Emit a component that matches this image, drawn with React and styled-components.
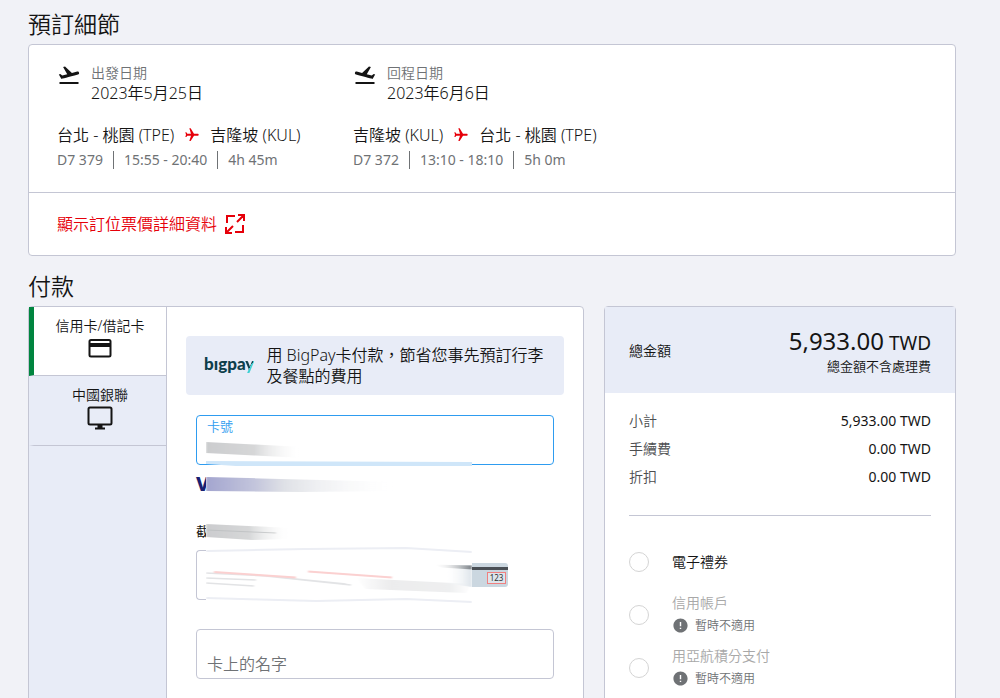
import React, { useState } from 'react'
import styled, { createGlobalStyle, css } from 'styled-components'
import { MdFlightTakeoff, MdFlight, MdError } from 'react-icons/md'

const color = {
  page: '#f1f2f7',
  panel: '#e8ecf7',
  line: '#c4c6d4',
  text: '#141414',
  grey: '#6f7275',
  red: '#e6000a',
  blue: '#2e9cf0',
  green: '#00853f',
}

const GlobalStyle = createGlobalStyle`
  * {
    box-sizing: border-box;
  }

  body {
    margin: 0;
    background: ${color.page};
    color: ${color.text};
    font-family: 'Noto Sans', 'Noto Sans CJK TC', sans-serif;
    font-size: 14px;
    font-weight: 350;
    line-height: 20px;
  }

  button, input {
    font: inherit;
    color: inherit;
  }
`

const Page = styled.main`
  padding: 8px 44px 0 28px;
`

const Title = styled.h2`
  margin: 0;
  font-size: 23px;
  font-weight: 350;
  line-height: 32px;
`

const Card = styled.section`
  background: white;
  border: 1px solid ${color.line};
  border-radius: 4px;
`

const BookingCard = styled(Card)`
  margin: 4px 0 14px;
`

const Flights = styled.div`
  display: flex;
  padding: 18px 28px 23px;
`

const Flight = styled.div`
  flex: 0 0 296px;
`

const FlightDate = styled.div`
  display: flex;
  gap: 10px;
  margin-bottom: 20px;
`

const FlightIcon = styled.span`
  display: flex;
  width: 24px;
  height: 24px;
  transform: ${props => (props.$mirrored ? 'scaleX(-1)' : 'none')};

  svg {
    width: 24px;
    height: 24px;
  }
`

const DateLabel = styled.div`
  color: ${color.grey};
`

const DateValue = styled.div`
  font-size: 16px;
`

const Route = styled.div`
  display: flex;
  align-items: center;
  gap: 10px;
  font-size: 16px;
  line-height: 24px;
  white-space: nowrap;

  svg {
    width: 16px;
    height: 16px;
    color: ${color.red};
    transform: rotate(90deg);
  }
`

const Facts = styled.div`
  display: flex;
  color: ${color.grey};
  font-weight: 400;
  line-height: 18px;
  margin-top: 4px;

  span + span {
    margin-left: 10px;
    padding-left: 10px;
    border-left: 1px solid ${color.grey};
  }
`

const DetailsBar = styled.div`
  border-top: 1px solid ${color.line};
  padding: 19px 28px;
`

const DetailsLink = styled.a`
  display: inline-flex;
  align-items: center;
  gap: 8px;
  color: ${color.red};
  font-size: 16px;
  line-height: 24px;
  text-decoration: none;
`

const Payment = styled.div`
  display: grid;
  grid-template-columns: 556fr 352fr;
  gap: 20px;
  margin-top: 4px;
`

const MethodCard = styled(Card)`
  display: flex;
  border-radius: 4px 4px 0 0;
`

const Tabs = styled.nav`
  flex: 0 0 138px;
  background: ${color.panel};
  border-right: 1px solid ${color.line};
`

const Tab = styled.button`
  display: flex;
  flex-direction: column;
  align-items: center;
  gap: 1px;
  width: 100%;
  height: 70px;
  padding: 9px 0 0;
  border: 0;
  border-left: 5px solid transparent;
  border-bottom: 1px solid ${color.line};
  background: none;

  ${props => props.$active && css`
    height: 69px;
    background: white;
    border-left-color: ${color.green};
  `}
`

const Form = styled.form`
  flex: 1;
  min-width: 0;
  padding: 29px 19px 40px;
`

const Promo = styled.div`
  display: flex;
  align-items: center;
  gap: 12px;
  padding: 9px 17px 8px 18px;
  margin-bottom: 20px;
  background: ${color.panel};
  border-radius: 4px;
  font-size: 16px;
  line-height: 21px;
`

const Logo = styled.span`
  flex: none;
  padding-bottom: 6px;
  color: #0e3f4b;
  font-family: Lato, sans-serif;
  font-size: 17px;
  font-weight: 900;
`

const LogoTail = styled.span`
  background: linear-gradient(120deg, #0e3f4b 62%, #3fd0d4 62%);
  background-clip: text;
  color: transparent;
`

const Fields = styled.div`
  position: relative;
  margin: 0 10px;
`

const Field = styled.label`
  display: flex;
  flex-direction: column;
  height: 50px;
  padding: 0 10px;
  background: white;
  border: 1px solid ${props => (props.$focused ? color.blue : color.line)};
  border-radius: 4px;
`

const FieldLabel = styled.span`
  color: ${color.blue};
  font-size: 13px;
  line-height: 20px;
`

const Input = styled.input`
  width: 100%;
  height: 28px;
  margin-top: auto;
  padding: 0;
  border: 0;
  outline: 0;
  background: transparent;
  font-size: 16px;

  &::placeholder {
    color: ${color.grey};
    opacity: 1;
  }
`

const Brand = styled.div`
  height: 14px;
  margin: 12px 0 33px;
  color: #1a1f71;
  font-size: 20px;
  font-weight: 800;
  line-height: 14px;
`

const ExpiryLabel = styled.div`
  height: 14px;
  margin-bottom: 12px;
  font-size: 13px;
  font-weight: 400;
  line-height: 14px;
`

const SecurityRow = styled.div`
  display: flex;
  align-items: center;
  margin-bottom: 29px;
`

const SecurityField = styled(Field)`
  flex: 0 0 276px;
  border-right: 0;
`

const Overlay = styled.svg`
  position: absolute;
  left: 10px;
  top: 0;
  pointer-events: none;
`

const Summary = styled(Card)`
  border-radius: 4px 4px 0 0;
`

const Total = styled.div`
  display: flex;
  align-items: center;
  justify-content: space-between;
  padding: 20px 24px 18px;
  background: ${color.panel};
`

const TotalAmount = styled.div`
  font-size: 19px;
  font-weight: 400;
  line-height: 28px;
  text-align: right;
`

const Big = styled.span`
  font-size: 24px;
`

const TotalNote = styled.div`
  font-size: 13px;
  line-height: 18px;
  text-align: right;
`

const Lines = styled.dl`
  margin: 0 24px;
  padding: 14px 0 24px;
  border-bottom: 1px solid ${color.line};
`

const Line = styled.div`
  display: flex;
  justify-content: space-between;
  line-height: 28px;

  dt {
    color: #4c4e50;
  }

  dd {
    margin: 0;
    font-weight: 400;
  }
`

const Options = styled.div`
  padding: 19px 24px 40px;
`

const Option = styled.label`
  display: flex;
  align-items: center;
  gap: 23px;
  height: 53px;
`

const Radio = styled.input.attrs({ type: 'radio' })`
  appearance: none;
  width: 20px;
  height: 20px;
  margin: 0;
  border: 1px solid #d4d4d4;
  border-radius: 50%;
  background: white;

  &:checked {
    border: 6px solid ${color.green};
  }
`

const OptionName = styled.div`
  color: ${props => (props.$off ? '#a8a8a8' : color.text)};
  line-height: 22px;
`

const Unavailable = styled.div`
  display: flex;
  align-items: center;
  gap: 6px;
  color: ${color.grey};
  font-size: 12px;
  line-height: 24px;
`

const ExpandIcon = () => (
  <svg width="20" height="20" viewBox="0 0 20 20" fill="none" stroke="currentColor" strokeWidth="2">
    <path d="M10 2H2v7M18 11v7h-8M12 8l6-6M8 12l-6 6M13 1h6v6M1 13v6h6" />
  </svg>
)

const CardIcon = () => (
  <svg width="24" height="24" viewBox="0 0 24 24" fill="none" stroke="#141414" strokeWidth="2">
    <rect x="1.5" y="3" width="21" height="16.5" rx="1.5" />
    <path d="M2 8h20" strokeWidth="4" />
  </svg>
)

const MonitorIcon = () => (
  <svg width="26" height="24" viewBox="0 0 26 24" fill="none" stroke="#141414" strokeWidth="2">
    <rect x="1.5" y="1.5" width="23" height="17" rx="1.5" />
    <path d="M13 18v4" strokeWidth="5" />
    <path d="M8 22.5h10" />
  </svg>
)

const CvvCard = () => (
  <svg width="36" height="24" viewBox="0 0 36 24">
    <path d="M0 0h33a3 3 0 0 1 3 3v18a3 3 0 0 1-3 3H0z" fill="#cbd7e0" />
    <path d="M0 4h36v3H0z" fill="#4a4f55" />
    <rect x="15.5" y="9.5" width="18" height="11" fill="#dde5eb" stroke="#f08080" />
    <text x="24.5" y="18" fontSize="8" fontWeight="400" textAnchor="middle" fill="#333">123</text>
  </svg>
)

// Smudged strokes that hide the card details
const Smudges = () => (
  <Overlay width="266" height="192" viewBox="0 0 266 192">
    <defs>
      <linearGradient id="grey">
        <stop offset="0" stopColor="#cbccce" />
        <stop offset="0.5" stopColor="#d6d7d8" />
        <stop offset="1" stopColor="#fff" stopOpacity="0" />
      </linearGradient>
      <linearGradient id="navy">
        <stop offset="0" stopColor="#a3a5cf" />
        <stop offset="0.25" stopColor="#c3c5dc" />
        <stop offset="0.4" stopColor="#dfe1e6" />
        <stop offset="1" stopColor="#fff" stopOpacity="0" />
      </linearGradient>
      <linearGradient id="stripe">
        <stop offset="0" stopColor="#fff" stopOpacity="0" />
        <stop offset="1" stopColor="#7b8186" />
      </linearGradient>
      <linearGradient id="haze">
        <stop offset="0" stopColor="#fff" stopOpacity="0" />
        <stop offset="1" stopColor="#dde4ea" />
      </linearGradient>
      <linearGradient id="patch">
        <stop offset="0" stopColor="#fff" />
        <stop offset="0.3" stopColor="#ececed" />
        <stop offset="0.8" stopColor="#eeeff0" />
        <stop offset="1" stopColor="#fff" />
      </linearGradient>
      <filter id="soft" x="-5%" y="-20%" width="110%" height="140%">
        <feGaussianBlur stdDeviation="1 0.6" />
      </filter>
    </defs>
    <path d="M0 46l266 1v4H30L0 49z" fill="#cfe6f9" />
    <path d="M0 58h20v66H0zM0 132h266v58H0z" fill="#fff" />
    <g filter="url(#soft)">
      <path d="M0 27l97 5v11L0 38z" fill="url(#grey)" />
      <path d="M0 62l195 5v9l-100 1L0 76z" fill="url(#navy)" />
      <path d="M0 109l86 4v11l-40 1L0 122z" fill="url(#grey)" />
      <path d="M0 115l70 3" stroke="#b9bbbd" strokeWidth="0.7" />
      <path d="M0 136l100-2 100-1 66 4" fill="none" stroke="#eceef4" strokeWidth="2" />
      <path d="M0 183l110 3 90-2 66 3" fill="none" stroke="#eceef4" strokeWidth="2" />
      <path d="M0 158l60 3 80 8M0 163l50 2M0 168l48 3M50 160l95 10" fill="none" stroke="#e2e3e5" strokeWidth="1.4" />
      <path d="M150 163l116 6-6 9-100-4z" fill="url(#patch)" />
      <path d="M238 150h28v22l-28-4z" fill="url(#haze)" />
      <path d="M226 149.500l40 1v4l-30-2z" fill="url(#stripe)" />
      <path d="M8 157l82 5.500M102 156.500l84 6" stroke="#fbd0d0" strokeWidth="2" />
    </g>
  </Overlay>
)

const flights = [
  {
    label: '出發日期',
    date: '2023年5月25日',
    from: '台北 - 桃園 (TPE)',
    to: '吉隆坡 (KUL)',
    facts: ['D7 379', '15:55 - 20:40', '4h 45m'],
  },
  {
    inbound: true,
    label: '回程日期',
    date: '2023年6月6日',
    from: '吉隆坡 (KUL)',
    to: '台北 - 桃園 (TPE)',
    facts: ['D7 372', '13:10 - 18:10', '5h 0m'],
  },
]

const lines = [
  ['小計', '5,933.00 TWD'],
  ['手續費', '0.00 TWD'],
  ['折扣', '0.00 TWD'],
]

const options = [
  { name: '電子禮券' },
  { name: '信用帳戶', off: true },
  { name: '用亞航積分支付', off: true },
]

const App = () => {
  const [tab, setTab] = useState('card')

  return (
    <Page>
      <GlobalStyle />
      <Title>預訂細節</Title>
      <BookingCard>
        <Flights>
          {flights.map(flight => (
            <Flight key={flight.label}>
              <FlightDate>
                <FlightIcon $mirrored={flight.inbound}><MdFlightTakeoff /></FlightIcon>
                <div>
                  <DateLabel>{flight.label}</DateLabel>
                  <DateValue>{flight.date}</DateValue>
                </div>
              </FlightDate>
              <Route>
                {flight.from}
                <MdFlight />
                {flight.to}
              </Route>
              <Facts>
                {flight.facts.map(fact => <span key={fact}>{fact}</span>)}
              </Facts>
            </Flight>
          ))}
        </Flights>
        <DetailsBar>
          <DetailsLink href="#details">
            顯示訂位票價詳細資料
            <ExpandIcon />
          </DetailsLink>
        </DetailsBar>
      </BookingCard>

      <Title>付款</Title>
      <Payment>
        <MethodCard>
          <Tabs>
            <Tab type="button" $active={tab === 'card'} onClick={() => setTab('card')}>
              信用卡/借記卡
              <CardIcon />
            </Tab>
            <Tab type="button" $active={tab === 'union'} onClick={() => setTab('union')}>
              中國銀聯
              <MonitorIcon />
            </Tab>
          </Tabs>
          <Form>
            <Promo>
              <Logo>bıgpa<LogoTail>y</LogoTail></Logo>
              <span>用 BigPay卡付款，節省您事先預訂行李及餐點的費用</span>
            </Promo>
            <Fields>
              <Field $focused>
                <FieldLabel>卡號</FieldLabel>
                <Input />
              </Field>
              <Brand>V</Brand>
              <ExpiryLabel>截</ExpiryLabel>
              <SecurityRow>
                <SecurityField>
                  <Input aria-label="CVV" />
                </SecurityField>
                <CvvCard />
              </SecurityRow>
              <Field>
                <Input placeholder="卡上的名字" aria-label="卡上的名字" />
              </Field>
              <Smudges />
            </Fields>
          </Form>
        </MethodCard>

        <Summary>
          <Total>
            <span>總金額</span>
            <div>
              <TotalAmount><Big>5,933.00</Big> TWD</TotalAmount>
              <TotalNote>總金額不含處理費</TotalNote>
            </div>
          </Total>
          <Lines>
            {lines.map(([name, value]) => (
              <Line key={name}>
                <dt>{name}</dt>
                <dd>{value}</dd>
              </Line>
            ))}
          </Lines>
          <Options>
            {options.map(({ name, off }) => (
              <Option key={name}>
                <Radio name="extra" disabled={off} />
                <div>
                  <OptionName $off={off}>{name}</OptionName>
                  {off && <Unavailable><MdError size={17} />暫時不適用</Unavailable>}
                </div>
              </Option>
            ))}
          </Options>
        </Summary>
      </Payment>
    </Page>
  )
}

export default App
